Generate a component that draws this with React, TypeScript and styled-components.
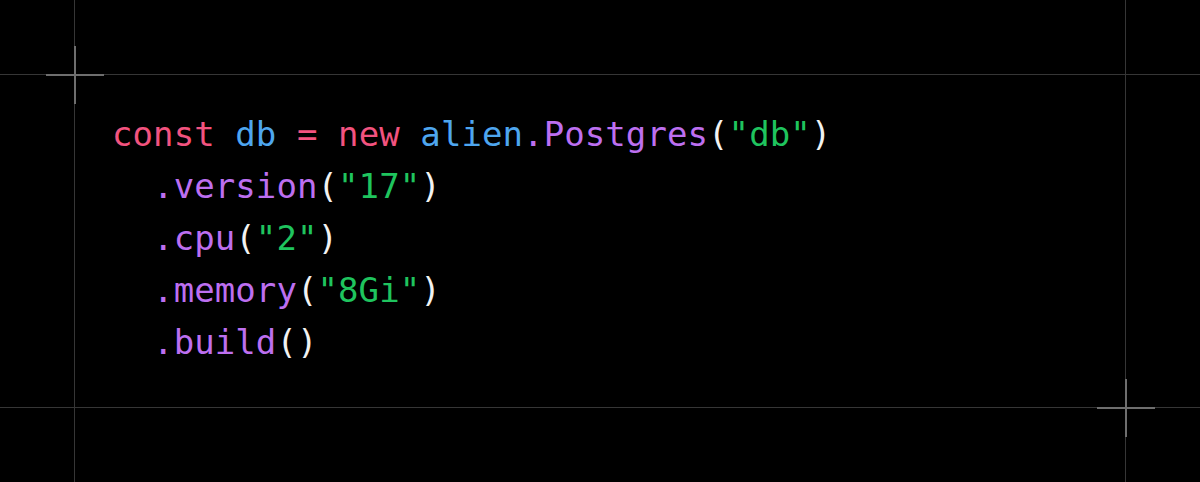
import React from "react";
import styled, { createGlobalStyle } from "styled-components";

const GlobalStyle = createGlobalStyle`
  html, body { margin: 0; padding: 0; background: #000; }
  #root { width: 1200px; height: 482px; }
`;

const Page = styled.div`
  position: relative;
  width: 1200px;
  height: 482px;
  overflow: hidden;
  display: grid;
  grid-template-columns: 74px 1fr 74px;
  grid-template-rows: 74px 1fr 74px;
  gap: 1px;
  background: #363636;
`;

const Cell = styled.div`
  background: #000;
`;

const CodePanel = styled.pre`
  margin: 0;
  background: #000;
  padding: 33px 0 0 37px;
  font-family: "DejaVu Sans Mono", "Liberation Mono", monospace;
  font-size: 34px;
  letter-spacing: 0.08px;
  line-height: 52px;
  color: #f2f2f2;
  display: flex;
  flex-direction: column;
`;

const Line = styled.div<{ $indent?: number }>`
  white-space: pre;
  padding-left: ${(p) => (p.$indent ?? 0) * 20.55}px;
`;

const tokenColors = {
  kw: "#f2537f",
  id: "#4ea6ef",
  fn: "#bd6ff0",
  str: "#1fc45e",
  punc: "#f2f2f2",
};

const Tok = styled.span<{ $k: keyof typeof tokenColors }>`
  color: ${(p) => tokenColors[p.$k]};
`;

const Cross = styled.div<{ $x: number; $y: number }>`
  position: absolute;
  left: ${(p) => p.$x - 29}px;
  top: ${(p) => p.$y - 29}px;
  width: 58px;
  height: 58px;
  pointer-events: none;
  &::before,
  &::after {
    content: "";
    position: absolute;
    background: #6e6e6e;
  }
  &::before {
    left: 0;
    right: 0;
    top: 28.5px;
    height: 2px;
  }
  &::after {
    top: 0;
    bottom: 0;
    left: 28.5px;
    width: 2px;
  }
`;

export default function App() {
  return (
    <>
      <GlobalStyle />
      <Page>
        <Cell />
        <Cell />
        <Cell />
        <Cell />
        <CodePanel>
          <Line>
            <Tok $k="kw">const</Tok> <Tok $k="id">db</Tok>{" "}
            <Tok $k="kw">=</Tok> <Tok $k="kw">new</Tok>{" "}
            <Tok $k="id">alien</Tok>
            <Tok $k="fn">.Postgres</Tok>
            <Tok $k="punc">(</Tok>
            <Tok $k="str">"db"</Tok>
            <Tok $k="punc">)</Tok>
          </Line>
          <Line $indent={2}>
            <Tok $k="fn">.version</Tok>
            <Tok $k="punc">(</Tok>
            <Tok $k="str">"17"</Tok>
            <Tok $k="punc">)</Tok>
          </Line>
          <Line $indent={2}>
            <Tok $k="fn">.cpu</Tok>
            <Tok $k="punc">(</Tok>
            <Tok $k="str">"2"</Tok>
            <Tok $k="punc">)</Tok>
          </Line>
          <Line $indent={2}>
            <Tok $k="fn">.memory</Tok>
            <Tok $k="punc">(</Tok>
            <Tok $k="str">"8Gi"</Tok>
            <Tok $k="punc">)</Tok>
          </Line>
          <Line $indent={2}>
            <Tok $k="fn">.build</Tok>
            <Tok $k="punc">()</Tok>
          </Line>
        </CodePanel>
        <Cell />
        <Cell />
        <Cell />
        <Cell />
        <Cross $x={74.5} $y={74.5} />
        <Cross $x={1125.5} $y={407.5} />
      </Page>
    </>
  );
}
